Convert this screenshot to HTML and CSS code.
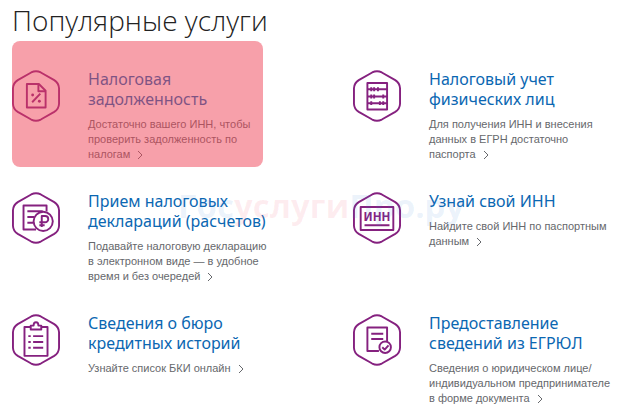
FILE: index.html
```
<!DOCTYPE html>
<html lang="ru">
<head>
    <meta charset="UTF-8">
    <meta name="viewport" content="width=device-width, initial-scale=1.0">
    <title>Популярные услуги</title>
    <link rel="stylesheet" href="styles.css">
</head>
<body>
    <!-- Shared shapes: hexagon frame and link arrow -->
    <svg class="sprite" aria-hidden="true">
        <symbol id="hex" viewBox="0 0 50 54">
            <path d="M20 2.500Q25 0 30 2.500L44 10.500Q48.800 13.500 49 19V35Q48.800 40.500 44 43.500L30 51.500Q25 54 20 51.500L6 43.500Q1.200 40.500 1 35V19Q1.200 13.500 6 10.500Z"/>
        </symbol>
        <symbol id="arrow" viewBox="0 0 6 10">
            <path d="M1 1l4 4-4 4"/>
        </symbol>
    </svg>

    <main class="services">
        <h1 class="services-title">Популярные услуги</h1>
        <div class="services-grid">
            <!-- Tax debt -->
            <article class="service service-marked">
                <svg class="service-icon" viewBox="0 0 50 54" aria-hidden="true">
                    <use href="#hex"/>
                    <path d="M15.500 14.500h12.500l7 7v17.500h-19.500z"/>
                    <path d="M27.500 15v7H34.500M21 33.500l8.500-9"/>
                    <circle class="fill" cx="21.500" cy="26" r="1.500"/>
                    <circle class="fill" cx="28.500" cy="32.500" r="1.500"/>
                </svg>
                <div class="service-text">
                    <h2><a href="#">Налоговая<br>задолженность</a></h2>
                    <p>Достаточно вашего ИНН, чтобы<br>проверить задолженность по<br>налогам <svg class="arrow" aria-hidden="true"><use href="#arrow"/></svg></p>
                </div>
            </article>

            <!-- Tax registration -->
            <article class="service">
                <svg class="service-icon" viewBox="0 0 50 54" aria-hidden="true">
                    <use href="#hex"/>
                    <path d="M15 13.500h20.500v27.500h-20.500zM15 20h20.500M15 27.500h20.500M15 34.500h20.500"/>
                    <path d="M19 18v4M22 18v4M26 18v4M19 25.500v4M22 25.500v4M31.500 25.500v4M19 32.500v4M28 32.500v4M31.500 32.500v4"/>
                </svg>
                <div class="service-text">
                    <h2><a href="#">Налоговый учет<br>физических лиц</a></h2>
                    <p>Для получения ИНН и внесения<br>данных в ЕГРН достаточно<br>паспорта <svg class="arrow" aria-hidden="true"><use href="#arrow"/></svg></p>
                </div>
            </article>

            <!-- Tax declarations -->
            <article class="service">
                <svg class="service-icon" viewBox="0 0 50 54" aria-hidden="true">
                    <use href="#hex"/>
                    <path d="M25 39H12V14h24v6M16 20h16M16 26h7M16 32h6"/>
                    <circle cx="32.500" cy="30.500" r="10"/>
                    <path d="M31 36.500V25h3.500a3 3 0 0 1 0 6.500H28.500M28.500 34.500h5.500"/>
                </svg>
                <div class="service-text">
                    <h2><a href="#">Прием налоговых<br>деклараций (расчетов)</a></h2>
                    <p>Подавайте налоговую декларацию<br>в электронном виде — в удобное<br>время и без очередей <svg class="arrow" aria-hidden="true"><use href="#arrow"/></svg></p>
                </div>
            </article>

            <!-- Taxpayer number -->
            <article class="service">
                <svg class="service-icon" viewBox="0 0 50 54" aria-hidden="true">
                    <use href="#hex"/>
                    <path d="M8 15.500h34v24h-34zM12 34.500h26"/>
                    <text x="25" y="30">ИНН</text>
                </svg>
                <div class="service-text">
                    <h2><a href="#">Узнай свой ИНН</a></h2>
                    <p>Найдите свой ИНН по паспортным<br>данным <svg class="arrow" aria-hidden="true"><use href="#arrow"/></svg></p>
                </div>
            </article>

            <!-- Credit bureaus -->
            <article class="service">
                <svg class="service-icon" viewBox="0 0 50 54" aria-hidden="true">
                    <use href="#hex"/>
                    <path d="M19 13.500h-6v30h24V13.500h-6"/>
                    <path d="M19.500 16v-4H22.500Q22.500 8.500 25 8.500T27.500 12h3v4z"/>
                    <path d="M17 23h2.500M22 23h10.500M17 29h2.500M22 29h10.500M17 35h2.500M22 35h10.500"/>
                </svg>
                <div class="service-text">
                    <h2><a href="#">Сведения о бюро<br>кредитных историй</a></h2>
                    <p>Узнайте список БКИ онлайн <svg class="arrow" aria-hidden="true"><use href="#arrow"/></svg></p>
                </div>
            </article>

            <!-- Company register -->
            <article class="service">
                <svg class="service-icon" viewBox="0 0 50 54" aria-hidden="true">
                    <use href="#hex"/>
                    <path d="M27 38.500H15v-24.500h20.500V28M19 20.500h12.500M19 26h12.500"/>
                    <circle cx="33.500" cy="34.500" r="6"/>
                    <path d="M30.500 34.500l2.500 2.500 4-4.500"/>
                </svg>
                <div class="service-text">
                    <h2><a href="#">Предоставление<br>сведений из ЕГРЮЛ</a></h2>
                    <p>Сведения о юридическом лице/<br>индивидуальном предпринимателе<br>в форме документа <svg class="arrow" aria-hidden="true"><use href="#arrow"/></svg></p>
                </div>
            </article>
        </div>
        <!-- Site watermark over the list -->
        <div class="watermark">Гос<span>услуги</span>Про.ру</div>
    </main>
</body>
</html>
```
FILE: styles.css
```
body {
    margin: 0;
    background-color: #fff;
    font-family: "Liberation Sans", Arial, sans-serif;
}

.sprite {
    position: absolute;
    width: 0;
    height: 0;
}

.services {
    position: relative;
    padding-left: 12px;
}

.services-title {
    margin: 0;
    font-family: "Open Sans", "Noto Sans", sans-serif;
    font-size: 28px;
    font-weight: 300;
    line-height: 41px;
    color: #222;
}

/* Two equal columns of services */
.services-grid {
    display: grid;
    grid-template-columns: 1fr 1fr;
    grid-auto-rows: minmax(122px, auto);
    column-gap: 54px;
}

.service {
    position: relative;
    display: flex;
    gap: 28px;
    padding-top: 28px;
    white-space: nowrap;
}

/* Red highlight over the first service */
.service-marked::after {
    content: "";
    position: absolute;
    inset: 0 36px -4px 0;
    border-radius: 8px;
    background-color: rgba(239, 65, 85, 0.5);
    pointer-events: none;
}

.service-icon {
    flex: none;
    width: 48px;
    height: 54px;
    fill: none;
    stroke: #85217f;
    stroke-width: 2;
    stroke-linejoin: round;
}

.service-icon .fill {
    fill: #85217f;
    stroke: none;
}

.service-icon text {
    fill: #85217f;
    stroke: none;
    font-family: "Noto Sans", sans-serif;
    font-size: 12px;
    font-weight: 700;
    text-anchor: middle;
}

.service h2 {
    margin: 0 0 8px;
    font-family: "Noto Sans", sans-serif;
    font-size: 16px;
    font-weight: 400;
    line-height: 20px;
}

.service a {
    color: #0b67b2;
    text-decoration: none;
}

.service a:hover {
    text-decoration: underline;
}

.service p {
    margin: 0;
    font-size: 11px;
    line-height: 15px;
    color: #66686c;
}

.arrow {
    width: 6px;
    height: 10px;
    margin-left: 4px;
    vertical-align: -2px;
    fill: none;
    stroke: #66686c;
}

.watermark {
    position: absolute;
    top: 182px;
    left: 178px;
    font-family: "Open Sans", sans-serif;
    font-size: 33px;
    font-weight: 700;
    line-height: 48px;
    color: rgba(60, 130, 220, 0.1);
    pointer-events: none;
}

.watermark span {
    color: rgba(240, 60, 90, 0.09);
}
```
